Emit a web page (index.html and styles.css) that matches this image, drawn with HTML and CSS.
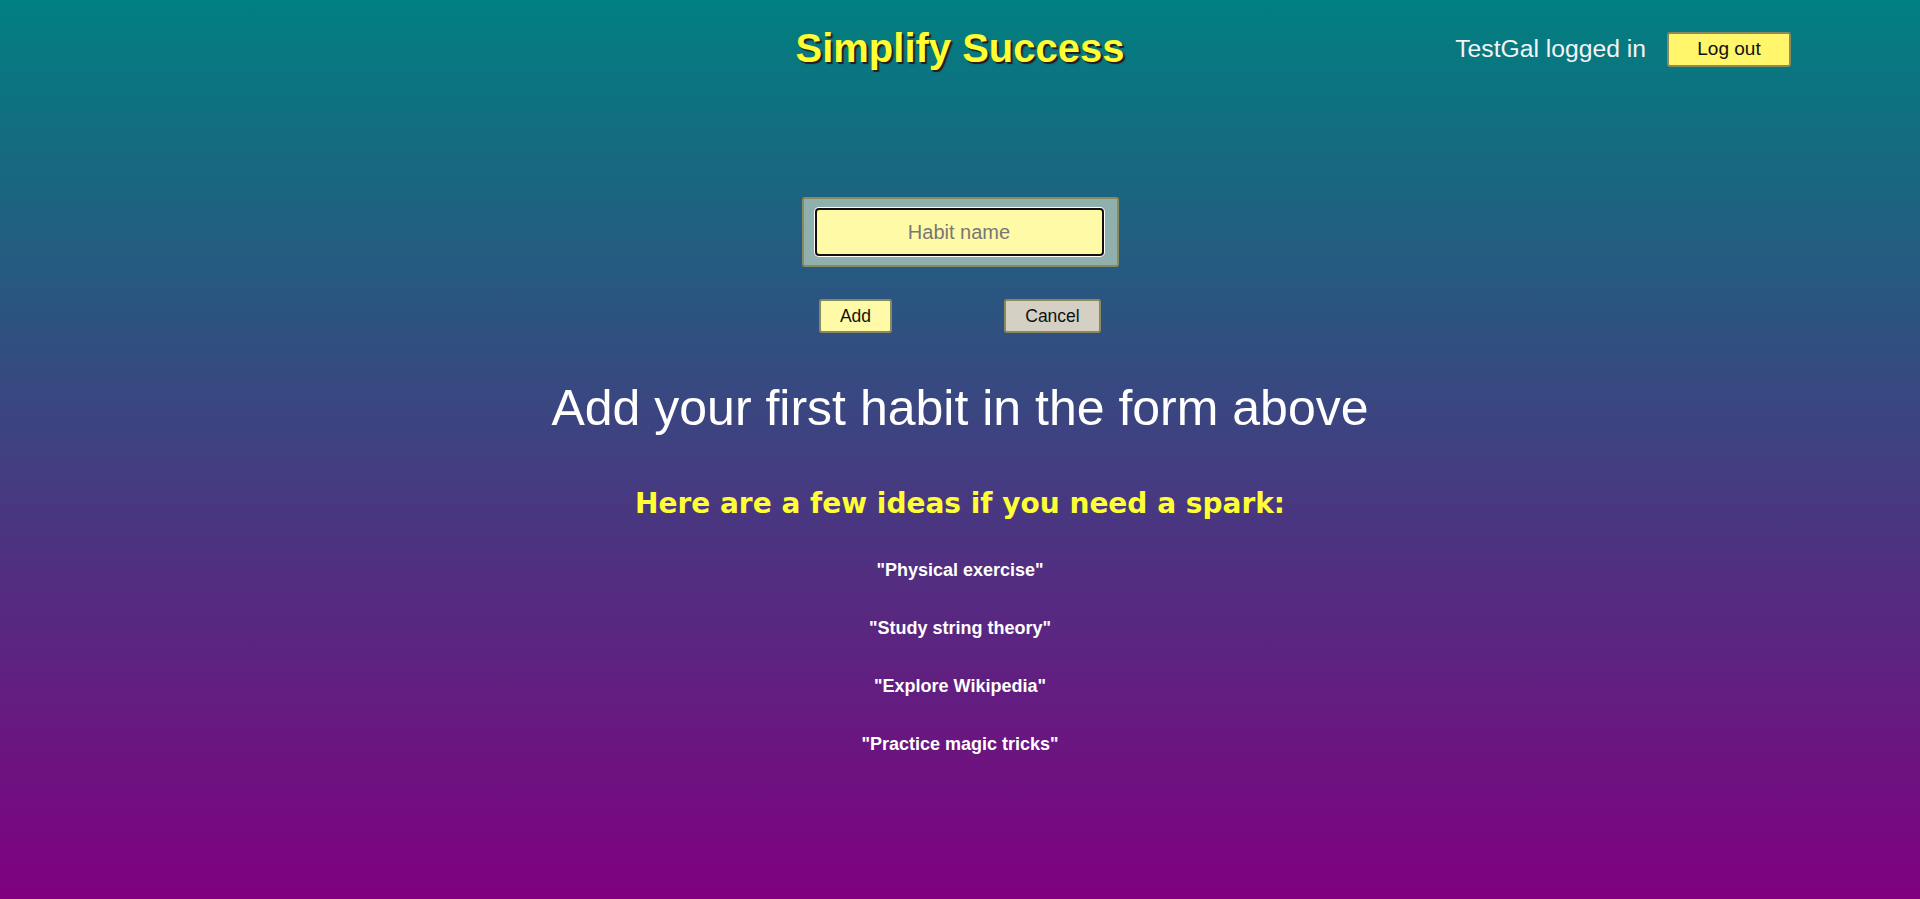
FILE: index.html
```html
<!DOCTYPE html>
<html lang="en">
<head>
<meta charset="utf-8">
<title>Simplify Success</title>
<link rel="stylesheet" href="styles.css">
</head>
<body>
<div class="page">
  <header class="header">
    <div class="header-side"></div>
    <h1 class="title">Simplify Success</h1>
    <div class="header-side header-user">
      <span class="user-label">TestGal logged in</span>
      <button class="btn btn-logout" type="button">Log out</button>
    </div>
  </header>

  <main class="main">
    <form class="habit-form">
      <div class="habit-box">
        <input class="habit-input" type="text" placeholder="Habit name" autofocus>
      </div>
      <div class="form-actions">
        <button class="btn btn-add" type="button">Add</button>
        <button class="btn btn-cancel" type="button">Cancel</button>
      </div>
    </form>

    <h2 class="empty-heading">Add your first habit in the form above</h2>
    <h3 class="ideas-heading">Here are a few ideas if you need a spark:</h3>
    <ul class="ideas-list">
      <li>"Physical exercise"</li>
      <li>"Study string theory"</li>
      <li>"Explore Wikipedia"</li>
      <li>"Practice magic tricks"</li>
    </ul>
  </main>
</div>
</body>
</html>
```
FILE: styles.css
```css
html, body {
  margin: 0;
  padding: 0;
  min-height: 100%;
}

body {
  min-height: 100vh;
  background: linear-gradient(to bottom, #008080 0%, #800080 100%);
  font-family: "Liberation Sans", Arial, sans-serif;
  color: #ffffff;
}

.page {
  min-height: 100vh;
}

.header {
  display: grid;
  grid-template-columns: 1fr auto 1fr;
  align-items: center;
  padding-top: 25px;
}

.title {
  margin: 0;
  font-size: 40px;
  line-height: 46px;
  font-weight: bold;
  color: #ffff33;
  text-shadow: 2px 2px 1px #2a1a1a;
}

.header-user {
  display: flex;
  justify-content: flex-end;
  align-items: center;
  gap: 21px;
  padding-right: 129px;
  padding-top: 2px;
}

.user-label {
  font-size: 24.7px;
  color: #f4f4f4;
}

.btn {
  font-family: "Liberation Sans", Arial, sans-serif;
  color: #111;
  border: 2px solid #8b8a5c;
  border-radius: 3px;
  box-sizing: border-box;
  padding: 0;
  cursor: pointer;
}

.btn-logout {
  width: 124px;
  height: 35px;
  background: #fff66c;
  font-size: 19px;
}

.main {
  display: flex;
  flex-direction: column;
  align-items: center;
}

.habit-form {
  margin-top: 126px;
  display: flex;
  flex-direction: column;
  align-items: center;
}

.habit-box {
  box-sizing: border-box;
  width: 317px;
  height: 70px;
  padding: 9px 13px 9px 11px;
  background: #8fb0ac;
  border: 2px solid #8b8a5c;
  border-radius: 3px;
}

.habit-input {
  box-sizing: border-box;
  width: 289px;
  height: 48px;
  margin: 0;
  border: 2px solid #111;
  border-radius: 4px;
  box-shadow: 0 0 0 1px #ffffff;
  outline: none;
  background: #fffaa6;
  font-family: "Liberation Sans", Arial, sans-serif;
  font-size: 20px;
  text-align: center;
  color: #222;
}

.habit-input::placeholder {
  color: #777777;
}

.form-actions {
  margin-top: 32px;
  display: flex;
  justify-content: center;
  gap: 112px;
}

.btn-add,
.btn-cancel {
  height: 34px;
  font-size: 17.5px;
}

.btn-add {
  width: 73px;
  background: #fffaa8;
}

.btn-cancel {
  width: 97px;
  background: #d4d0c4;
}

.empty-heading {
  margin: 46px 0 0;
  font-size: 50px;
  line-height: 58px;
  font-weight: normal;
  color: #ffffff;
  text-align: center;
}

.ideas-heading {
  margin: 50px 0 0;
  font-family: "DejaVu Sans", Verdana, sans-serif;
  font-size: 28px;
  line-height: 33px;
  font-weight: bold;
  color: #ffff33;
  text-align: center;
}

.ideas-list {
  list-style: none;
  margin: 40px 0 0;
  padding: 0;
  display: flex;
  flex-direction: column;
  align-items: center;
  gap: 37px;
}

.ideas-list li {
  font-size: 18px;
  line-height: 21px;
  font-weight: bold;
  color: #ffffff;
}
```
